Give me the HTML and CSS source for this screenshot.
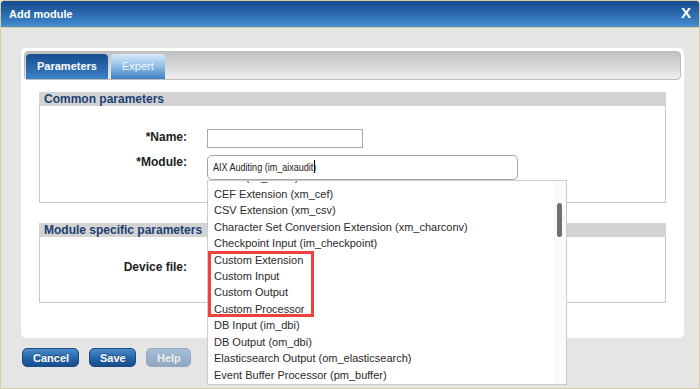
FILE: index.html
```html
<!DOCTYPE html>
<html lang="en">
<head>
    <meta charset="UTF-8">
    <title>Add module</title>
    <link rel="stylesheet" href="styles.css">
</head>
<body>
    <div class="dialog">
        <div class="titlebar">
            <span class="title">Add module</span>
            <span class="close">X</span>
        </div>

        <div class="dialog-body">
            <div class="panel">
                <div class="tabs">
                    <div class="tab active">Parameters</div>
                    <div class="tab">Expert</div>
                </div>

                <div class="section">
                    <div class="section-title">Common parameters</div>
                    <div class="section-body form-grid common">
                        <label>*Name:</label>
                        <div><input type="text" class="name-input"></div>

                        <label class="module-label">*Module:</label>
                        <div class="module-field">
                            <div class="module-input"><span class="value">AIX Auditing (im_aixaudit)</span><span class="caret"></span></div>

                            <div class="dropdown">
                                <ul class="options">
                                    <li>Azure (im_azure)</li>
                                    <li>CEF Extension (xm_cef)</li>
                                    <li>CSV Extension (xm_csv)</li>
                                    <li>Character Set Conversion Extension (xm_charconv)</li>
                                    <li>Checkpoint Input (im_checkpoint)</li>
                                    <li>Custom Extension</li>
                                    <li>Custom Input</li>
                                    <li>Custom Output</li>
                                    <li>Custom Processor</li>
                                    <li>DB Input (im_dbi)</li>
                                    <li>DB Output (om_dbi)</li>
                                    <li>Elasticsearch Output (om_elasticsearch)</li>
                                    <li>Event Buffer Processor (pm_buffer)</li>
                                </ul>
                                <div class="scrollbar"><div class="thumb"></div></div>
                                <div class="highlight"></div>
                            </div>
                        </div>
                    </div>
                </div>

                <div class="section second">
                    <div class="section-title">Module specific parameters</div>
                    <div class="section-body form-grid specific">
                        <label>Device file:</label>
                        <div></div>
                    </div>
                </div>
            </div>

            <div class="buttons">
                <button class="btn cancel">Cancel</button>
                <button class="btn save">Save</button>
                <button class="btn disabled">Help</button>
            </div>
        </div>
    </div>
</body>
</html>
```

FILE: styles.css
```css
* {
    margin: 0;
    padding: 0;
    box-sizing: border-box;
}

body {
    font-family: "Liberation Sans", Arial, sans-serif;
    background: #e5e5e5;
    width: 700px;
    height: 389px;
    overflow: hidden;
}

.dialog {
    width: 700px;
    height: 389px;
    border: 1px solid #d7cf9f;
    border-radius: 4px 4px 0 0;
    background: #e5e5e5;
    overflow: hidden;
}

.titlebar {
    height: 27px;
    display: flex;
    align-items: center;
    justify-content: space-between;
    padding: 0 8px 1px 8px;
    background: linear-gradient(#174a8b, #3478bd 70%, #4a8fcf);
    border-bottom: 1px solid #d7cf9f;
    color: white;
    font-weight: bold;
}

.title {
    font-size: 11px;
}

.close {
    font-size: 15px;
    margin-top: -2px;
}

.dialog-body {
    padding: 20px 15px 0 20px;
}

.panel {
    background: white;
    border-radius: 5px;
    padding: 3px;
    height: 290px;
}

.tabs {
    height: 29px;
    border: 1px solid #bcbcbc;
    border-radius: 4px;
    background: linear-gradient(#c0c0c0, #eeeeee);
    display: flex;
    align-items: flex-end;
    gap: 3px;
    padding-left: 1px;
}

.tab {
    height: 25px;
    line-height: 25px;
    font-size: 11px;
    color: #f2f6fb;
    padding: 0 11px;
    border-radius: 4px 4px 0 0;
    background: linear-gradient(#d8eaf9, #8ebde6 50%, #3c7fc2);
}

.tab.active {
    width: 82px;
    font-weight: bold;
    color: white;
    background: linear-gradient(#174d8f, #2a68ad 55%, #3c84c8);
}

.section {
    margin: 12px 15px 0 15px;
}

.section.second {
    margin-top: 20px;
}

.section-title {
    height: 14px;
    line-height: 14px;
    background: #d3d3d3;
    color: #1d3f72;
    font-size: 12px;
    font-weight: bold;
    padding-left: 5px;
}

.section-body {
    border: 1px solid #c8c8c8;
    border-top: none;
}

.form-grid {
    display: grid;
    grid-template-columns: 147px 1fr;
    column-gap: 20px;
    row-gap: 7px;
    align-items: start;
    align-content: start;
}

.form-grid label {
    text-align: right;
    font-size: 12px;
    font-weight: bold;
    color: #222;
    line-height: 16px;
}

.common {
    height: 97px;
    padding-top: 23px;
}

.specific {
    height: 66px;
    padding-top: 22px;
}

.module-label {
    margin-top: -1px;
}

.name-input {
    display: block;
    width: 156px;
    height: 19px;
    border: 1px solid #a9a9a9;
}

.module-field {
    position: relative;
}

.module-input {
    width: 311px;
    height: 25px;
    border: 1px solid #a5a5a5;
    border-radius: 5px;
    font-size: 11px;
    color: #222;
    line-height: 23px;
    padding-left: 5px;
    white-space: nowrap;
}

/* narrow face isn't installed, squeeze the regular one */
.value {
    display: inline-block;
    transform: scaleX(0.82);
    transform-origin: left center;
    margin-right: -25px;
}

.caret {
    display: inline-block;
    width: 1px;
    height: 13px;
    background: #000;
    vertical-align: -2px;
}

.dropdown {
    position: absolute;
    left: 0;
    top: 25px;
    width: 360px;
    height: 205px;
    background: white;
    border: 1px solid #cccccc;
    overflow: hidden;
    z-index: 5;
}

.options {
    list-style: none;
    margin-top: -11.6px;
}

.options li {
    height: 16.45px;
    line-height: 16.45px;
    font-size: 11px;
    color: #2a2a2a;
    padding-left: 6px;
    white-space: nowrap;
}

.scrollbar {
    position: absolute;
    top: 0;
    right: 0;
    width: 12px;
    height: 100%;
    background: #fafafa;
}

.thumb {
    margin: 22px 0 0 3px;
    width: 5px;
    height: 34px;
    border-radius: 3px;
    background: #707070;
}

.highlight {
    position: absolute;
    left: 0;
    top: 70px;
    width: 106px;
    height: 66px;
    border: 3px solid #f0413f;
}

.buttons {
    display: flex;
    gap: 10px;
    margin-top: 10px;
    padding-left: 1px;
}

.btn {
    height: 19px;
    padding: 0 10px;
    border: 1px solid #1a4b86;
    border-radius: 5px;
    background: linear-gradient(#4b8ccc, #2363a8 55%, #184d8c);
    color: white;
    font-family: "Liberation Sans", Arial, sans-serif;
    font-size: 11px;
    font-weight: bold;
    text-shadow: 0 -1px 0 rgba(0,0,0,0.3);
}

.cancel {
    width: 57px;
}

.save {
    width: 47px;
}

.disabled {
    width: 45px;
    opacity: 0.4;
}
```
